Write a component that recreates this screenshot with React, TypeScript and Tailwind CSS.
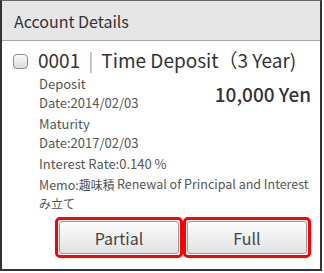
import React from "react";

const font = { fontFamily: '"Noto Sans CJK JP", "Noto Sans", sans-serif' };

function ActionButton({ label }: { label: string }) {
  return (
    <div className="h-[41px] w-[130px] rounded-[5px] border-[3px] border-[#f00] p-px">
      <button className="flex h-full w-full items-center justify-center rounded-[3px] border border-[#9a9a9a] bg-gradient-to-b from-[#fdfdfd] to-[#e2e2e2] text-[16px] text-[#444]">
        {label}
      </button>
    </div>
  );
}

export default function App() {
  return (
    <div className="h-[273px] w-[324px] bg-white" style={font}>
      <div className="flex h-[271px] w-[322px] flex-col border-2 border-t border-[#333] border-t-[#666]">
        <div className="flex h-[40px] shrink-0 items-center border-b border-[#a8a8a8] bg-[#e6e6e6] px-[12px] text-[16px] text-[#333]">
          Account Details
        </div>
        <div className="flex flex-1 flex-col pl-[11px] pr-[9px] pt-[8px]">
          <div className="flex h-[22px] items-center gap-[10px]">
            <span className="mt-[2px] h-[15px] w-[15px] shrink-0 rounded-[4px] border border-[#8a8a8a] bg-gradient-to-b from-[#fafafa] to-[#dcdcdc]" />
            <span className="whitespace-nowrap text-[19px] text-[#333]">
              0001<span className="mx-[8px] text-[#aaa]">|</span>Time Deposit（3 Year)
            </span>
          </div>
          <div className="flex pl-[26px] pt-[3px] text-[13px] leading-[19px] text-[#555]">
            <div className="flex flex-1 flex-col gap-[2px]">
              <div>
                <div>Deposit</div>
                <div>Date:2014/02/03</div>
              </div>
              <div>
                <div>Maturity</div>
                <div>Date:2017/02/03</div>
              </div>
              <div>Interest Rate:0.140 %</div>
            </div>
            <div className="pt-[8px] text-[19px] font-medium leading-[24px] text-[#333]">10,000 Yen</div>
          </div>
          <div className="mt-[2px] flex pl-[26px] text-[12.5px] leading-[19px] text-[#555]">
            <div className="w-[78px] shrink-0 whitespace-nowrap">
              <div>
                Memo:<span className="text-[12px]">趣味積</span>
              </div>
              <div className="text-[12px]">み立て</div>
            </div>
            <div className="-mt-[1px] whitespace-nowrap">Renewal of Principal and Interest</div>
          </div>
          <div className="mt-[4px] flex pl-[42px]">
            <ActionButton label="Partial" />
            <ActionButton label="Full" />
          </div>
        </div>
      </div>
    </div>
  );
}
